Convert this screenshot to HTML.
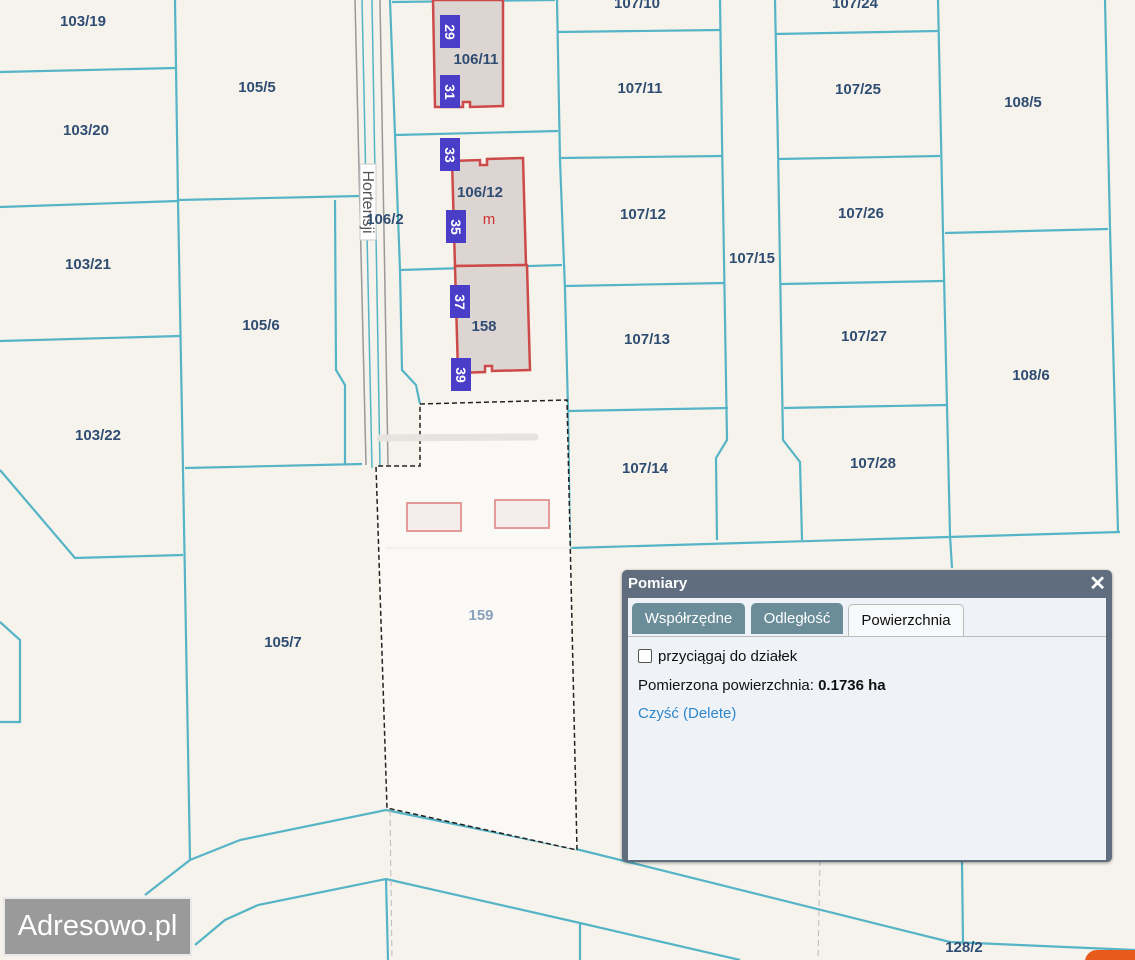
<!DOCTYPE html>
<html><head><meta charset="utf-8"><style>
html,body{margin:0;padding:0;width:1135px;height:960px;overflow:hidden;background:#f6f3ec;font-family:"Liberation Sans",sans-serif}
svg{position:absolute;left:0;top:0}
.lb{font:bold 15px "Liberation Sans",sans-serif;fill:#2f4d73;text-anchor:middle}
#dlg{position:absolute;left:622px;top:570px;width:478px;height:286px;background:#5f6d7e;border-radius:5px;padding:0 6px 6px 6px;box-sizing:content-box;box-shadow:0 1px 3px rgba(0,0,0,.4)}
#hd{height:28px;color:#fff;font-weight:bold;font-size:15px;line-height:28px;padding-left:0;position:relative}
#x{position:absolute;right:0;top:0;font-size:20px}
#bd{background:#eff3f8;height:262px;position:relative}
.tab{position:absolute;top:5px;height:31px;line-height:31px;font-size:15px;text-align:center;border-radius:5px 5px 0 0;color:#fff;background:#6a8d99}
#txt{position:absolute;left:10px;top:46px;font-size:15px;color:#111}
</style></head><body>
<svg width="1135" height="960" viewBox="0 0 1135 960">
<g fill="none" stroke="#55b4c6" stroke-width="2.2">
<polyline points="0,72 175,68"/>
<polyline points="0,207 178,201"/>
<polyline points="0,341 180,336"/>
<polyline points="175,0 178,200 183,470 190,860"/>
<polyline points="178,200 360,196"/>
<polyline points="185,468 362,464"/>
<polyline points="335,200 336,370 345,385 345,464"/>
<polyline points="0,470 75,558 183,555"/>
<polyline points="0,622 20,640 20,722 0,722"/>
<polyline points="390,0 395,135 400,270 402,370 416,385 420,404"/>
<polyline points="395,135 558,131"/>
<polyline points="400,270 562,265"/>
<polyline points="392,2 555,0"/>
<polyline points="557,0 560,160 565,290 568,410 570,548"/>
<polyline points="557,32 720,30"/>
<polyline points="560,158 722,156"/>
<polyline points="565,286 725,283"/>
<polyline points="568,411 728,408"/>
<polyline points="720,0 722,140 727,440 716,458 717,540"/>
<polyline points="775,0 778,150 783,440 800,462 802,540"/>
<polyline points="775,34 938,31"/>
<polyline points="778,159 940,156"/>
<polyline points="781,284 943,281"/>
<polyline points="784,408 946,405"/>
<polyline points="938,0 943,233 950,535 952,568"/>
<polyline points="945,233 1108,229"/>
<polyline points="1105,0 1110,228 1118,532"/>
<polyline points="570,548 1120,532"/>
<polyline points="386,810 240,840 190,860 145,895"/>
<polyline points="386,879 258,905 225,920 195,945"/>
<polyline points="386,810 580,850 950,942 1135,950"/>
<polyline points="386,879 580,923 740,960"/>
<polyline points="386,879 388,960"/>
<polyline points="580,923 580,960"/>
<polyline points="962,862 963,942"/>
</g>
<g stroke="#999" stroke-width="1.5" fill="none">
<line x1="355" y1="0" x2="366" y2="465"/><line x1="380" y1="0" x2="388" y2="465"/>
</g>
<g stroke="#55b4c6" stroke-width="1.5" fill="none">
<line x1="362" y1="0" x2="372" y2="468"/><line x1="372" y1="0" x2="380" y2="468"/>
</g>
<g stroke="#bbb" stroke-width="1" stroke-dasharray="6,4"><line x1="390" y1="810" x2="392" y2="960"/><line x1="820" y1="860" x2="818" y2="960"/></g>
<polygon points="420,404 567,400 577,850 387,808 376,466 420,466" fill="#faf9f6" stroke="#222" stroke-width="1.5" stroke-dasharray="5,3"/>
<line x1="380" y1="438" x2="535" y2="437" stroke="#e6e4e0" stroke-width="7" stroke-linecap="round"/>
<line x1="386" y1="548" x2="572" y2="548" stroke="#ece8e2" stroke-width="1"/>
<rect x="407" y="503" width="54" height="28" fill="#f5ecec" stroke="#e59a9a" stroke-width="2"/>
<rect x="495" y="500" width="54" height="28" fill="#f5ecec" stroke="#e59a9a" stroke-width="2"/>
<g fill="#ddd5d1" stroke="#cd4a4a" stroke-width="2.5">
<polygon points="433,0 503,0 503,106 470,107 470,102 463,102 463,107 435,107"/>
<polygon points="452,161 480,160 480,165 487,165 487,159 523,158 526,265 455,266"/>
<polygon points="455,266 527,265 530,370 492,371 492,366 485,366 485,372 458,373"/>
</g>
<g fill="#4a3dc8">
<rect x="440" y="15" width="20" height="33"/><rect x="440" y="75" width="20" height="33"/>
<rect x="440" y="138" width="20" height="33"/><rect x="446" y="210" width="20" height="33"/>
<rect x="450" y="285" width="20" height="33"/><rect x="451" y="358" width="20" height="33"/>
</g>
<g fill="#fff" font-family="Liberation Sans" font-weight="bold" font-size="14" text-anchor="middle">
<text transform="translate(445,32) rotate(90)">29</text>
<text transform="translate(445,92) rotate(90)">31</text>
<text transform="translate(445,155) rotate(90)">33</text>
<text transform="translate(451,227) rotate(90)">35</text>
<text transform="translate(455,302) rotate(90)">37</text>
<text transform="translate(456,375) rotate(90)">39</text>
</g>
<rect x="360" y="164" width="16" height="76" fill="#fff" stroke="#ccc" stroke-width="1"/>
<text transform="translate(363,202) rotate(90)" font-family="Liberation Sans" font-size="16" fill="#555" text-anchor="middle">Hortensji</text>
<text x="489" y="224" font-family="Liberation Sans" font-size="15" fill="#cc3333" text-anchor="middle">m</text>
<g class="lb">
<text class="lb" x="83" y="26">103/19</text><text class="lb" x="257" y="92">105/5</text>
<text class="lb" x="86" y="135">103/20</text><text class="lb" x="476" y="64">106/11</text>
<text class="lb" x="640" y="93">107/11</text><text class="lb" x="858" y="94">107/25</text>
<text class="lb" x="1023" y="107">108/5</text><text class="lb" x="480" y="197">106/12</text>
<text class="lb" x="643" y="219">107/12</text><text class="lb" x="861" y="218">107/26</text>
<text class="lb" x="385" y="224">106/2</text><text class="lb" x="752" y="263">107/15</text>
<text class="lb" x="88" y="269">103/21</text><text class="lb" x="261" y="330">105/6</text>
<text class="lb" x="484" y="331">158</text><text class="lb" x="647" y="344">107/13</text>
<text class="lb" x="864" y="341">107/27</text><text class="lb" x="1031" y="380">108/6</text>
<text class="lb" x="98" y="440">103/22</text><text class="lb" x="645" y="473">107/14</text>
<text class="lb" x="873" y="468">107/28</text><text class="lb" x="283" y="647">105/7</text>
<text class="lb" x="964" y="952">128/2</text><text class="lb" x="637" y="8">107/10</text>
<text class="lb" x="855" y="8">107/24</text>
<text class="lb" x="481" y="620" style="fill:#8aa0bb">159</text>
</g>
<rect x="1085" y="950" width="60" height="30" rx="12" fill="#e85a1c"/>
</svg>
<div style="position:absolute;left:3px;top:897px;width:185px;height:55px;background:#9a9a9a;border:2px solid #e8e8e8;color:#fff;font-size:29px;line-height:55px;text-align:center">Adresowo.pl</div>
<div id="dlg"><div id="hd">Pomiary<span id="x">✕</span></div>
<div id="bd">
<div class="tab" style="left:4px;width:113px">Współrzędne</div>
<div class="tab" style="left:123px;width:92px">Odległość</div>
<div class="tab" style="left:220px;width:114px;background:#f7f9fb;color:#111;border:1px solid #bbb;border-bottom:none;height:32px;top:6px">Powierzchnia</div>
<div style="position:absolute;left:0;right:0;top:38px;border-top:1px solid #bbb"></div>
<div id="txt">
<div style="height:24px;display:flex;align-items:center"><span style="display:inline-block;width:12px;height:12px;border:1px solid #555;border-radius:2px;background:#fff;margin-right:6px"></span>przyciągaj do działek</div>
<div style="margin-top:9px">Pomierzona powierzchnia: <b>0.1736 ha</b></div>
<div style="margin-top:11px;color:#2f86c9">Czyść (Delete)</div>
</div></div></div>
</body></html>
